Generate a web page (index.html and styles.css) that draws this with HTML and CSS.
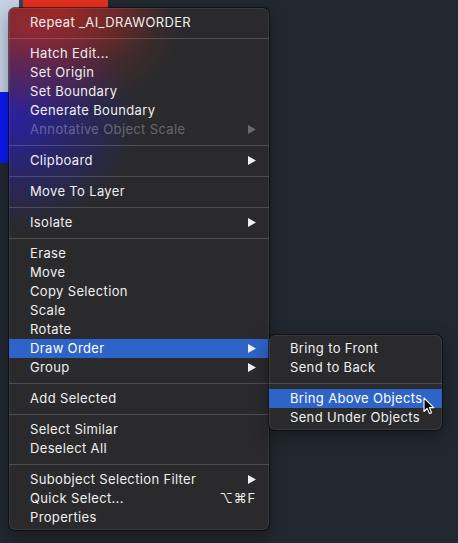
FILE: index.html
```html
<!DOCTYPE html>
<html>
<head>
<meta charset="utf-8">
<link rel="stylesheet" href="styles.css">
</head>
<body>
<div class="desk">
  <div class="shape shape-light"></div>
  <div class="shape shape-blue"></div>
  <div class="shape shape-red"></div>
  <div class="shape shape-topleft"></div>

  <div class="menu main-menu">
    <div class="item">Repeat _AI_DRAWORDER</div>
    <div class="sep"></div>
    <div class="item">Hatch Edit...</div>
    <div class="item">Set Origin</div>
    <div class="item">Set Boundary</div>
    <div class="item">Generate Boundary</div>
    <div class="item disabled">Annotative Object Scale<svg class="arrow" viewBox="0 0 8 9"><polygon points="0,0 8,4.5 0,9"/></svg></div>
    <div class="sep"></div>
    <div class="item">Clipboard<svg class="arrow" viewBox="0 0 8 9"><polygon points="0,0 8,4.5 0,9"/></svg></div>
    <div class="sep"></div>
    <div class="item">Move To Layer</div>
    <div class="sep"></div>
    <div class="item">Isolate<svg class="arrow" viewBox="0 0 8 9"><polygon points="0,0 8,4.5 0,9"/></svg></div>
    <div class="sep"></div>
    <div class="item">Erase</div>
    <div class="item">Move</div>
    <div class="item">Copy Selection</div>
    <div class="item">Scale</div>
    <div class="item">Rotate</div>
    <div class="item active">Draw Order<svg class="arrow" viewBox="0 0 8 9"><polygon points="0,0 8,4.5 0,9"/></svg></div>
    <div class="item">Group<svg class="arrow" viewBox="0 0 8 9"><polygon points="0,0 8,4.5 0,9"/></svg></div>
    <div class="sep"></div>
    <div class="item">Add Selected</div>
    <div class="sep"></div>
    <div class="item">Select Similar</div>
    <div class="item">Deselect All</div>
    <div class="sep"></div>
    <div class="item">Subobject Selection Filter<svg class="arrow" viewBox="0 0 8 9"><polygon points="0,0 8,4.5 0,9"/></svg></div>
    <div class="item">Quick Select...<span class="shortcut">⌥⌘F</span></div>
    <div class="item">Properties</div>
  </div>

  <div class="menu sub-menu">
    <div class="item">Bring to Front</div>
    <div class="item">Send to Back</div>
    <div class="sep"></div>
    <div class="item active">Bring Above Objects</div>
    <div class="item">Send Under Objects</div>
  </div>

  <svg class="cursor" viewBox="0 0 12 18" width="12" height="18">
    <path d="M1 1 L1 14.5 L4.2 11.4 L6.5 16.6 L8.6 15.7 L6.4 10.6 L10.8 10.6 Z" fill="#000" stroke="#fff" stroke-width="1.1" stroke-linejoin="round"/>
  </svg>
</div>
</body>
</html>
```
FILE: styles.css
```css
html, body {
  margin: 0;
  padding: 0;
}
body {
  background: #222830;
  font-family: "Inter", "Liberation Sans", sans-serif;
  font-size: 13px;
  color: #efefef;
}
.desk {
  position: relative;
  width: 458px;
  height: 543px;
  overflow: hidden;
  background: #222830;
}
.shape {
  position: absolute;
}
.shape-light {
  left: 0;
  top: 0;
  width: 20px;
  height: 92px;
  background: #c6d1e6;
}
.shape-blue {
  left: 0;
  top: 92px;
  width: 20px;
  height: 71px;
  background: #0c1af2;
}
.shape-red {
  left: 22px;
  top: 0;
  width: 86px;
  height: 12px;
  background: #e5311f;
}
.shape-topleft {
  left: 19px;
  top: 0;
  width: 4px;
  height: 10px;
  background: #3a3f5a;
}
.menu {
  position: absolute;
  box-sizing: border-box;
  border-radius: 6px;
  background: #2a2a2c;
  box-shadow: 0 0 0 1px rgba(0, 0, 0, 0.55), inset 0 0 0 1px rgba(255, 255, 255, 0.08), 0 6px 18px rgba(0, 0, 0, 0.35);
  overflow: hidden;
}
.main-menu {
  left: 9px;
  top: 8px;
  width: 260px;
  height: 522px;
  padding: 5px 0 4px;
  background:
    radial-gradient(ellipse 150px 90px at 20px 20px, rgba(200, 40, 40, 0.55), rgba(200, 40, 40, 0) 100%),
    radial-gradient(ellipse 130px 110px at 0px 110px, rgba(40, 30, 200, 0.75), rgba(40, 30, 200, 0) 100%),
    radial-gradient(ellipse 110px 60px at 50px 0px, rgba(220, 40, 30, 0.45), rgba(220, 40, 30, 0) 100%),
    #2a2a2c;
}
.sub-menu {
  left: 269px;
  top: 335px;
  width: 173px;
  height: 95px;
  padding: 4px 0;
}
.item {
  position: relative;
  display: flex;
  align-items: center;
  height: 19px;
  line-height: 19px;
  padding: 0 13px 0 21px;
  white-space: nowrap;
  letter-spacing: 0.35px;
}
.item.disabled {
  color: rgba(255, 255, 255, 0.3);
}
.item.active {
  background: #2e63c8;
  color: #fff;
}
.arrow {
  margin-left: auto;
  width: 8px;
  height: 9px;
  fill: #f0f0f0;
}
.item.disabled .arrow {
  fill: rgba(255, 255, 255, 0.3);
}
.shortcut {
  margin-left: auto;
  letter-spacing: 0.8px;
}
.sep {
  height: 1px;
  margin: 6px 0 5px;
  background: rgba(255, 255, 255, 0.17);
}
.cursor {
  position: absolute;
  left: 423px;
  top: 397px;
}
```
